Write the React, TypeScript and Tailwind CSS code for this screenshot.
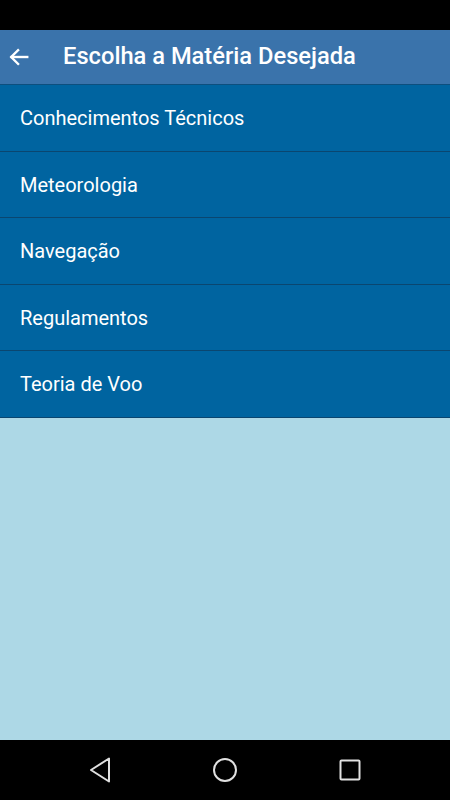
import React from "react";

const items = [
  "Conhecimentos Técnicos",
  "Meteorologia",
  "Navegação",
  "Regulamentos",
  "Teoria de Voo",
];

export default function App() {
  return (
    <div
      className="w-[450px] h-[800px] flex flex-col bg-[#add8e6] overflow-hidden"
      style={{ fontFamily: "Roboto, 'Noto Sans', sans-serif" }}
    >
      <div className="h-[30px] bg-black shrink-0" />
      <div className="h-[54px] bg-[#3a73ab] flex items-center shrink-0 border-b border-[#0d4f7e] box-content">
        <div className="w-[38px] pl-[8px] flex items-center">
          <svg width="22" height="22" viewBox="0 0 24 24" fill="none" stroke="white" strokeWidth="2.6" strokeLinecap="square">
            <path d="M21 12H4" />
            <path d="M11 4.5L3.5 12L11 19.5" />
          </svg>
        </div>
        <div className="pl-[25px] text-white text-[23.7px] font-medium leading-none">
          Escolha a Matéria Desejada
        </div>
      </div>
      <div className="flex flex-col bg-[#0064a0]">
        {items.map((t) => (
          <div
            key={t}
            className="h-[66.5px] flex items-center pl-[20px] pt-[1px] text-white text-[20px] border-b border-[#0a4670]"
          >
            {t}
          </div>
        ))}
      </div>
      <div className="flex-1" />
      <div className="h-[60px] bg-black shrink-0 flex items-center justify-center">
        <div className="w-[125px] flex justify-center">
          <svg width="22" height="26" viewBox="0 0 22 26" fill="none" stroke="#e0e0e0" strokeWidth="2" strokeLinejoin="round">
            <path d="M20 1.5V24.5L2 13Z" />
          </svg>
        </div>
        <div className="w-[125px] flex justify-center">
          <svg width="26" height="26" viewBox="0 0 26 26" fill="none" stroke="#e0e0e0" strokeWidth="2">
            <circle cx="13" cy="13" r="11" />
          </svg>
        </div>
        <div className="w-[125px] flex justify-center">
          <svg width="22" height="22" viewBox="0 0 22 22" fill="none" stroke="#e0e0e0" strokeWidth="2">
            <rect x="1.5" y="1.5" width="19" height="19" rx="1" />
          </svg>
        </div>
      </div>
    </div>
  );
}
